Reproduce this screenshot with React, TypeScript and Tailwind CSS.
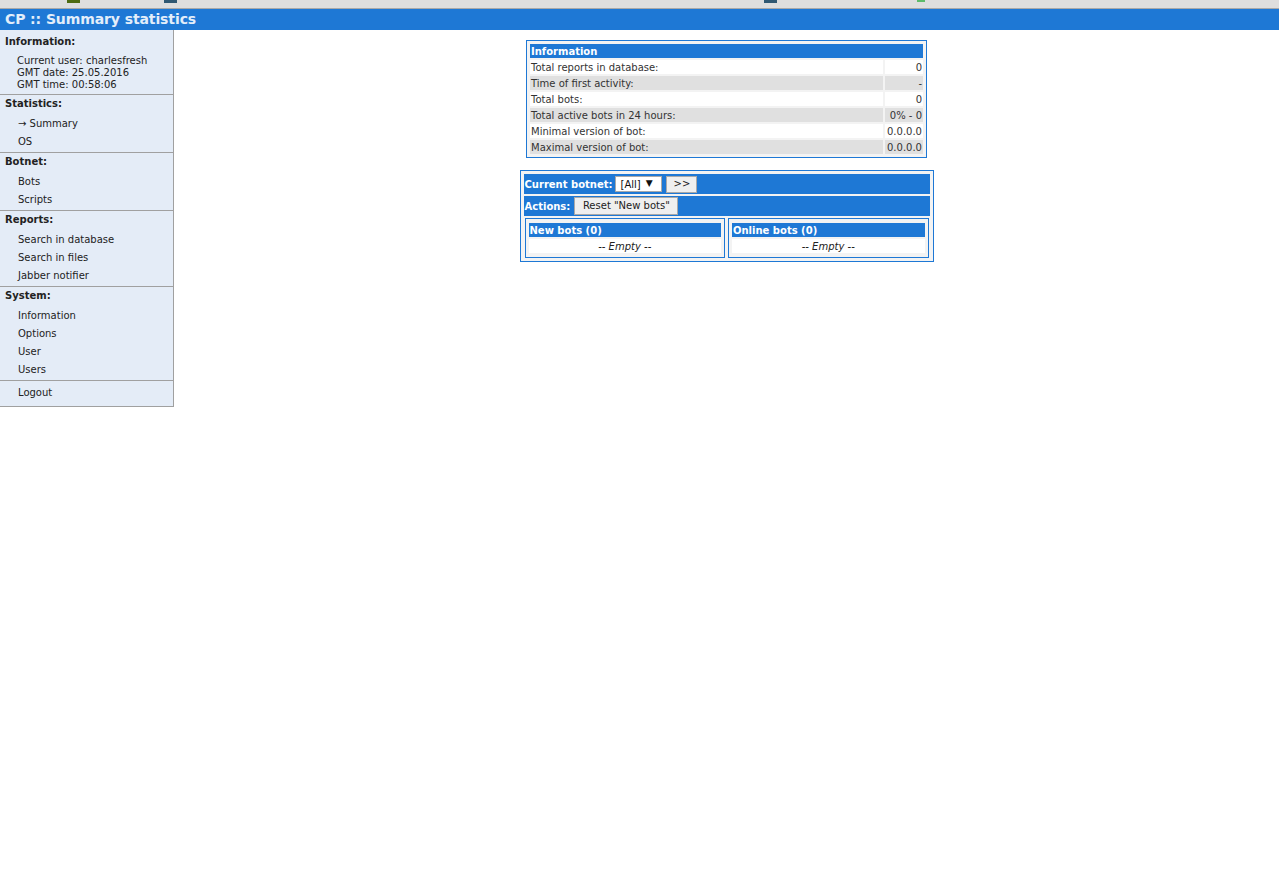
import React from 'react';

const blue = 'bg-[#1e78d5]';

const menu: { title: string; items: string[] }[] = [
  { title: 'Statistics:', items: ['→ Summary', 'OS'] },
  { title: 'Botnet:', items: ['Bots', 'Scripts'] },
  { title: 'Reports:', items: ['Search in database', 'Search in files', 'Jabber notifier'] },
  { title: 'System:', items: ['Information', 'Options', 'User', 'Users'] },
];

const stats: [string, string][] = [
  ['Total reports in database:', '0'],
  ['Time of first activity:', '-'],
  ['Total bots:', '0'],
  ['Total active bots in 24 hours:', '0% - 0'],
  ['Minimal version of bot:', '0.0.0.0'],
  ['Maximal version of bot:', '0.0.0.0'],
];

const BotList: React.FC<{ title: string }> = ({ title }) => (
  <div className="flex-1 border border-[#1e78d5] bg-[#f3f3f3] px-[3px] pt-[4px] pb-[4px] flex flex-col gap-[2px]">
    <div className={`${blue} h-[14px] pt-[1px] leading-[13px] px-[1px] font-bold text-white`}>{title}</div>
    <div className="bg-white h-[14px] pt-[1px] leading-[13px] text-center italic text-[#222]">-- Empty --</div>
  </div>
);

export default function App() {
  return (
    <div
      className="min-h-screen bg-white text-[10px] text-[#222]"
      style={{ fontFamily: '"DejaVu Sans", Verdana, sans-serif' }}
    >
      {/* browser bookmarks strip (cropped) */}
      <div className="relative h-[9px] bg-[#dedede] border-b border-[#a8a8a8]">
        <span className="absolute left-[67px] top-0 w-[13px] h-[3px] bg-[#4d6b12]" />
        <span className="absolute left-[164px] top-0 w-[13px] h-[3px] bg-[#2f5873]" />
        <span className="absolute left-[764px] top-0 w-[13px] h-[3px] bg-[#2f5873]" />
        <span className="absolute left-[917px] top-0 w-[8px] h-[2px] bg-[#5dbb6a]" />
      </div>

      {/* title bar */}
      <div className={`${blue} h-[21px] flex items-center px-[5px]`}>
        <h1 className="text-[14px] font-bold text-[#e3eefa] tracking-[-0.1px]">CP :: Summary statistics</h1>
      </div>

      <div className="flex items-start">
        {/* sidebar */}
        <div className="w-[174px] shrink-0 bg-[#e4ecf7] border-r border-b border-[#a0a0a0]">
          <div className="border-b border-[#a0a0a0] pt-[4px] pb-[3px]">
            <div className="h-[14px] pt-[1px] leading-[13px] px-[5px] font-bold">Information:</div>
            <div className="mt-[7px] pl-[17px] leading-[12px]">
              <div>Current user: charlesfresh</div>
              <div>GMT date: 25.05.2016</div>
              <div>GMT time: 00:58:06</div>
            </div>
          </div>
          {menu.map((s) => (
            <div key={s.title} className="border-b border-[#a0a0a0] pt-[1px] pb-[2px]">
              <div className="h-[14px] pt-[1px] leading-[13px] px-[5px] font-bold">{s.title}</div>
              <ul className="mt-[4px]">
                {s.items.map((it) => (
                  <li key={it} className="h-[18px] pt-[2px] leading-[16px] pl-[18px]">{it}</li>
                ))}
              </ul>
            </div>
          ))}
          <div className="pt-[2px] pb-[5px]">
            <div className="h-[18px] pt-[2px] leading-[16px] pl-[18px]">Logout</div>
          </div>
        </div>

        {/* content */}
        <div className="flex-1 flex flex-col items-center pt-[10px]">
          <div className="w-[401px] border border-[#1e78d5] bg-[#f3f3f3] p-[1px]">
            <table className="w-full border-separate border-spacing-[2px]">
              <thead>
                <tr>
                  <th colSpan={2} className={`${blue} h-[14px] p-0 pt-[1px] leading-[13px] px-[1px] text-left font-bold text-white`}>
                    Information
                  </th>
                </tr>
              </thead>
              <tbody>
                {stats.map(([k, v], i) => (
                  <tr key={k} className={i % 2 ? 'bg-[#e0e0e0]' : 'bg-white'}>
                    <td className="h-[14px] p-0 pt-[1px] leading-[13px] px-[1px] text-[#333]">{k}</td>
                    <td className="w-[38px] h-[14px] p-0 pt-[1px] leading-[13px] pr-[1px] text-right text-[#333] whitespace-nowrap">{v}</td>
                  </tr>
                ))}
              </tbody>
            </table>
          </div>

          <div className="mt-[12px] w-[414px] border border-[#1e78d5] bg-[#f3f3f3] p-[3px] flex flex-col gap-[2px]">
            <div className={`${blue} h-[20px] flex items-center px-[1px] gap-[3px]`}>
              <span className="font-bold text-white">Current botnet:</span>
              <span className="h-[16px] w-[47px] bg-white border border-[#a9a9a9] flex items-center px-[4px] gap-[5px] text-[#111]">
                [All] <span className="text-[9px]">▼</span>
              </span>
              <button className="ml-[1px] h-[17px] w-[31px] bg-[#efefef] border border-[#a9a9a9] text-[#222] leading-none">
                &gt;&gt;
              </button>
            </div>
            <div className={`${blue} h-[20px] flex items-center px-[1px] gap-[3px]`}>
              <span className="font-bold text-white">Actions:</span>
              <button className="ml-[1px] h-[18px] w-[104px] bg-[#efefef] border border-[#a9a9a9] text-[#222] leading-none">
                Reset "New bots"
              </button>
            </div>
            <div className="flex gap-[3px] px-[1px]">
              <BotList title="New bots (0)" />
              <BotList title="Online bots (0)" />
            </div>
          </div>
        </div>
      </div>
    </div>
  );
}
